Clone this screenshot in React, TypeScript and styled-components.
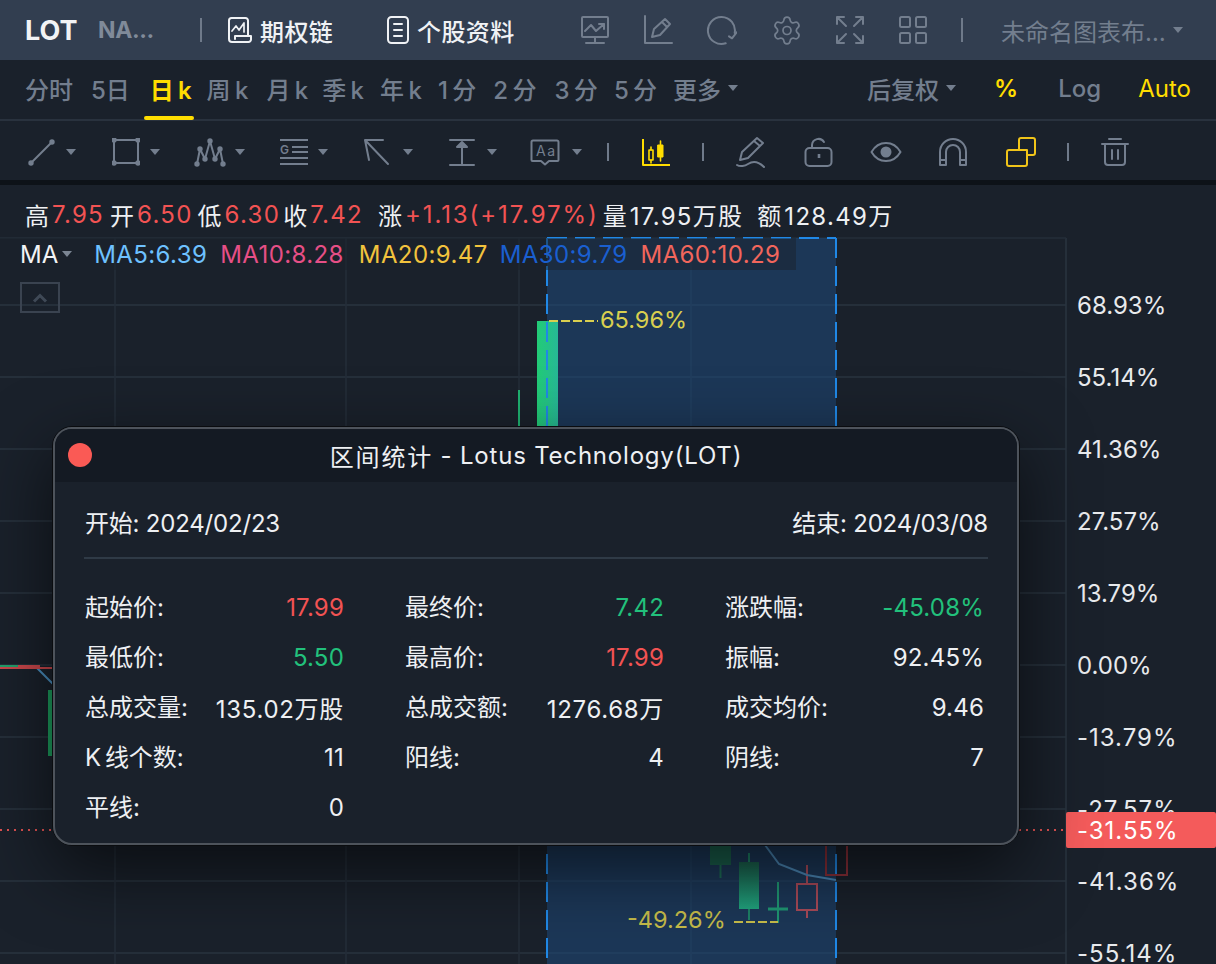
import React from "react";
import styled, { createGlobalStyle } from "styled-components";
import { Settings } from "lucide-react";

const FONT = `Inter, "Noto Sans CJK SC", sans-serif`;
const GRAY = "#737e8e";
const YELLOW = "#ffdd00";
const RED = "#f25353";
const GREEN = "#22c17c";

const Global = createGlobalStyle`
  html, body { margin: 0; padding: 0; background: #1a212b; }
  body { font-family: ${FONT}; overflow: hidden; }
  #root { width: 1216px; height: 964px; overflow: hidden; }
`;

const Page = styled.div`
  width: 1216px;
  height: 964px;
  display: flex;
  flex-direction: column;
  background: #1a212b;
  overflow: hidden;
`;

const TopBar = styled.header`
  height: 60px;
  flex: none;
  display: flex;
  align-items: center;
  padding-left: 25px;
  background: #323e50;
  color: #f0f2f5;
  font-size: 24px;
`;
const Ticker = styled.span`
  font-size: 27px;
  font-weight: 700;
  color: #f2f3f5;
  width: 73px;
`;
const TickerName = styled.span`
  font-size: 23px;
  font-weight: 700;
  letter-spacing: -0.4px;
  color: #808a99;
  width: 102px;
`;
const VBar = styled.i<{ $ml?: number; $mr?: number; $h?: number; $c?: string }>`
  display: block;
  flex: none;
  width: 2px;
  height: ${(p) => p.$h ?? 24}px;
  margin-left: ${(p) => p.$ml ?? 0}px;
  margin-right: ${(p) => p.$mr ?? 0}px;
  background: ${(p) => p.$c ?? "#6f7a8a"};
`;
const TopLink = styled.span<{ $w: number }>`
  display: flex;
  align-items: center;
  gap: 7px;
  width: ${(p) => p.$w}px;
  flex: none;
  white-space: nowrap;
  color: #f0f2f5;
  font-weight: 500;
  letter-spacing: 0.4px;
`;
const TopIcon = styled.span<{ $ml: number; $w: number }>`
  display: flex;
  justify-content: center;
  flex: none;
  width: ${(p) => p.$w}px;
  margin-left: ${(p) => p.$ml}px;
  color: ${GRAY};
`;
const Layout = styled.span`
  display: flex;
  align-items: center;
  color: ${GRAY};
  white-space: nowrap;
`;
const Caret = styled.i<{ $ml?: number; $c?: string }>`
  display: block;
  flex: none;
  width: 0;
  height: 0;
  margin-left: ${(p) => p.$ml ?? 7}px;
  border-left: 5px solid transparent;
  border-right: 5px solid transparent;
  border-top: 6px solid ${(p) => p.$c ?? GRAY};
`;

const PeriodBar = styled.nav`
  height: 61px;
  flex: none;
  box-sizing: border-box;
  display: flex;
  align-items: center;
  padding-left: 25px;
  padding-bottom: 3px;
  border-bottom: 2px solid #29323e;
  color: ${GRAY};
  font-size: 24px;
`;
const Period = styled.span<{ $on?: boolean; $accent?: boolean; $weight?: number; $ml: number }>`
  position: relative;
  display: flex;
  align-items: center;
  flex: none;
  white-space: pre;
  margin-left: ${(p) => p.$ml}px;
  word-spacing: -2px;
  color: ${(p) => (p.$on || p.$accent ? YELLOW : GRAY)};
  font-weight: ${(p) => p.$weight ?? (p.$on ? 600 : 500)};
  &::after {
    content: "";
    display: ${(p) => (p.$on ? "block" : "none")};
    position: absolute;
    left: -6px;
    right: -2px;
    bottom: -14px;
    height: 4px;
    border-radius: 2px;
    background: ${YELLOW};
  }
`;

const ToolBar = styled.div`
  height: 59px;
  flex: none;
  box-sizing: border-box;
  padding-top: 2px;
  display: flex;
  align-items: center;
  color: ${GRAY};
`;
const Tool = styled.span<{ $ml: number; $c?: string }>`
  display: flex;
  align-items: center;
  flex: none;
  margin-left: ${(p) => p.$ml}px;
  color: ${(p) => p.$c ?? GRAY};
`;

const Band = styled.div`
  height: 5px;
  flex: none;
  background: #0d1218;
`;
const Quote = styled.div`
  height: 52px;
  flex: none;
  box-sizing: border-box;
  display: flex;
  align-items: center;
  padding: 6px 0 0 25px;
  font-size: 24px;
  color: #eef0f3;
  white-space: nowrap;
`;
const QLabel = styled.span<{ $ml?: number }>`
  margin-left: ${(p) => p.$ml ?? 0}px;
  margin-right: 3px;
`;
const QValue = styled.span<{ $red?: boolean; $wide?: boolean }>`
  color: ${(p) => (p.$red ? RED : "#eef0f3")};
  font-size: 24px;
  letter-spacing: ${(p) => (p.$wide ? 1.9 : 1.3)}px;
`;

const Chart = styled.main`
  position: relative;
  flex: 1;
  overflow: hidden;
`;
const ChartSvg = styled.svg`
  display: block;
  width: 1216px;
  height: 727px;
  font-family: ${FONT};
`;
const Legend = styled.div`
  position: absolute;
  left: 0;
  top: 1px;
  width: 796px;
  height: 32px;
  display: flex;
  align-items: center;
  padding-left: 20px;
  box-sizing: border-box;
  font-size: 24px;
  white-space: nowrap;
  background: rgba(26, 33, 43, 0.5);
  color: #f2f3f5;
`;
const LegendItem = styled.span<{ $c: string; $ml: number }>`
  color: ${(p) => p.$c};
  margin-left: ${(p) => p.$ml}px;
  letter-spacing: 0.4px;
`;
const Collapse = styled.div`
  position: absolute;
  left: 20px;
  top: 45px;
  width: 40px;
  height: 31px;
  box-sizing: border-box;
  display: flex;
  align-items: center;
  justify-content: center;
  border: 2px solid #3a4350;
  color: #3f4956;
`;

const Modal = styled.section`
  position: absolute;
  left: 53px;
  top: 190px;
  width: 966px;
  height: 418px;
  box-sizing: border-box;
  border: 2px solid #4d535b;
  border-radius: 19px;
  overflow: hidden;
  display: flex;
  flex-direction: column;
  background: #1a212b;
  color: #eef0f3;
`;
const ModalShadow = styled.div`
  position: absolute;
  left: 52px;
  top: 189px;
  width: 968px;
  height: 420px;
  border-radius: 20px;
  border: 1px solid #0a0c0f;
  box-sizing: border-box;
  box-shadow: 0 24px 70px rgba(0, 0, 0, 0.6);
`;
const ModalHead = styled.header`
  position: relative;
  height: 53px;
  flex: none;
  box-sizing: border-box;
  padding-bottom: 1px;
  display: flex;
  align-items: center;
  justify-content: center;
  background: #141a23;
  font-size: 24px;
  letter-spacing: 0.8px;
  white-space: pre;
`;
const TitleCn = styled.span`
  letter-spacing: 1.8px;
`;
const Close = styled.i`
  position: absolute;
  left: 13px;
  top: 14px;
  width: 24px;
  height: 24px;
  border-radius: 50%;
  background: #fa5a55;
`;
const ModalBody = styled.div`
  flex: 1;
  padding: 0 29px 0 29px;
  display: flex;
  flex-direction: column;
`;
const Range = styled.div`
  height: 77px;
  flex: none;
  box-sizing: border-box;
  display: flex;
  align-items: center;
  justify-content: space-between;
  padding: 4px 0 0 1px;
  font-size: 24px;
  letter-spacing: -0.2px;
  border-bottom: 2px solid #2f3a46;
`;
const Stats = styled.div`
  display: grid;
  grid-template-columns: repeat(3, 259px);
  column-gap: 61px;
  grid-auto-rows: 50px;
  padding: 23px 0 0 1px;
  font-size: 24px;
`;
const Stat = styled.div`
  display: flex;
  align-items: center;
  justify-content: space-between;
  white-space: pre;
`;
const StatLabel = styled.span`
  padding-bottom: 3px;
  word-spacing: -3px;
`;
const StatValue = styled.span<{ $c?: string; $wide?: boolean }>`
  color: ${(p) => p.$c ?? "#eef0f3"};
  letter-spacing: ${(p) => (p.$wide ? 0.7 : 0.2)}px;
`;

type P = { children: React.ReactNode; w?: number; h?: number };
const Svg = ({ children, w = 28, h = 28 }: P) => (
  <svg width={w} height={h} viewBox={`0 0 ${w} ${h}`} fill="none" stroke="currentColor" strokeWidth={2} strokeLinecap="round" strokeLinejoin="round">
    {children}
  </svg>
);

const Dots = ({ pts }: { pts: number[][] }) => (
  <>
    {pts.map(([x, y], i) => (
      <circle key={i} cx={x} cy={y} r={2.7} fill="currentColor" stroke="none" />
    ))}
  </>
);

const I = {
  option: (
    <Svg w={26} h={28}>
      <path d="M21 20V4.500A2.500 2.500 0 0 0 18.500 2H4.500A2.500 2.500 0 0 0 2 4.500V23a3 3 0 0 0 3 3h16.500a2.500 2.500 0 0 0 2.500-2.500V20H8v3" />
      <path d="M5 15l4-5 3 4 5-7v9" strokeWidth={1.7} />
    </Svg>
  ),
  doc: (
    <Svg w={24} h={30}>
      <rect x="2" y="2" width="20" height="26" rx="3.500" />
      <path d="M8 9h8M8 15h8M8 21h8" />
    </Svg>
  ),
  monitor: (
    <Svg w={30} h={30}>
      <rect x="2" y="2" width="26" height="20" rx="1" />
      <path d="M15 22v6M6 28h18M5 16l6-6 5 6 8-7M19 9h5v5" />
    </Svg>
  ),
  editChart: (
    <Svg w={30} h={30}>
      <path d="M1 1v27h27" />
      <path d="M8 22l2-8L21 4l5 5-10 11z M18 7l5 5" />
    </Svg>
  ),
  refresh: (
    <Svg w={34} h={32}>
      <path d="M22.700 29.300A13.500 13.500 0 1 1 31.700 19" />
      <path d="M26 22.300l3 2 4.700-6" />
    </Svg>
  ),
  expand: (
    <Svg w={30} h={30}>
      <path d="M2 9V2h7M2 2l9 9M28 9V2h-7M28 2l-9 9M2 21v7h7M2 28l9-9M28 21v7h-7M28 28l-9-9" />
    </Svg>
  ),
  grid: (
    <Svg w={30} h={30}>
      <rect x="2" y="2" width="10" height="10" rx="1.500" />
      <rect x="18" y="2" width="10" height="10" rx="1.500" />
      <rect x="2" y="18" width="10" height="10" rx="1.500" />
      <rect x="18" y="18" width="10" height="10" rx="1.500" />
    </Svg>
  ),
  line: (
    <Svg>
      <path d="M3 25L24 4" />
      <Dots pts={[[3, 25], [24, 4]]} />
    </Svg>
  ),
  rect: (
    <Svg>
      <rect x="2" y="2" width="24" height="23" />
      <Dots pts={[[2, 2], [26, 2], [2, 25], [26, 25]]} />
    </Svg>
  ),
  wave: (
    <Svg w={32} h={30}>
      <path d="M3 27L6 12l5 10L16 4l5 18 5-10 3 15" />
      <Dots pts={[[3, 27], [6, 12], [11, 22], [16, 4], [21, 22], [26, 12], [29, 27]]} />
    </Svg>
  ),
  fib: (
    <Svg w={28} h={28}>
      <path d="M0 2h28M12 9h16M12 14h16M0 20h28M0 26h28" strokeLinecap="butt" />
      <text x="0" y="16" fontSize="12" fontWeight="600" stroke="none" fill="currentColor" fontFamily="Inter, sans-serif">G</text>
    </Svg>
  ),
  arrow: (
    <Svg>
      <path d="M26 26L3 2M3 2h18M3 2l4 20" />
    </Svg>
  ),
  price: (
    <Svg>
      <path d="M2 2h24M2 27h24M14 7v20" />
      <path d="M9 9l5-5 5 5z" fill="currentColor" />
    </Svg>
  ),
  text: (
    <Svg w={32} h={28}>
      <path d="M4 2.500h24a1.500 1.500 0 0 1 1.500 1.500v18a1 1 0 0 1-1 1H20l-4 3.500-4-3.500H3.500a1 1 0 0 1-1-1V4A1.500 1.500 0 0 1 4 2.500z" />
      <text x="7" y="18" fontSize="14" letterSpacing="1.500" stroke="none" fill="currentColor" fontFamily="Inter, sans-serif">Aa</text>
    </Svg>
  ),
  candle: (
    <Svg w={30} h={30}>
      <path d="M2 2v26h27" strokeLinecap="butt" />
      <rect x="8" y="13" width="4" height="10" strokeWidth={1.600} />
      <path d="M10 10v3M10 23v3" strokeWidth={1.600} />
      <rect x="17" y="8" width="5" height="12" fill="currentColor" strokeWidth={1} />
      <path d="M19.500 4v4M19.500 20v4" strokeWidth={1.600} />
    </Svg>
  ),
  pen: (
    <Svg w={30} h={32}>
      <path d="M4 24l2-8L21 2l6 5-15 15z M18 5l6 5" />
      <path d="M1 29c3 2 8 1 11-1s9-4 16 3" />
    </Svg>
  ),
  lock: (
    <Svg w={30} h={32}>
      <rect x="1.500" y="12" width="26" height="18" rx="4" />
      <path d="M8 12V9a6.500 6.500 0 0 1 12-3" />
      <path d="M15 18v4" strokeWidth={2.600} strokeLinecap="butt" />
    </Svg>
  ),
  eye: (
    <Svg w={32} h={24}>
      <path d="M1.500 12C5 6 10 3 16 3s11 3 14.500 9C27 18 22 21 16 21S5 18 1.500 12z" />
      <circle cx="16" cy="12" r="5.500" fill="currentColor" stroke="none" />
    </Svg>
  ),
  magnet: (
    <Svg w={30} h={30}>
      <path d="M2 28V15a13 13 0 0 1 26 0v13h-6V15a7 7 0 0 0-14 0v13zM2 23h6M22 23h6" />
    </Svg>
  ),
  link: (
    <Svg w={30} h={30}>
      <path d="M13 13V3a2 2 0 0 1 2-2h12a2 2 0 0 1 2 2v13a2 2 0 0 1-2 2H21" />
      <path d="M21 13v14a2 2 0 0 1-2 2H3a2 2 0 0 1-2-2V15a2 2 0 0 1 2-2h18" />
    </Svg>
  ),
  trash: (
    <Svg w={30} h={30}>
      <path d="M2 7h26M9 2h12M5 7v18a3 3 0 0 0 3 3h14a3 3 0 0 0 3-3V7M12 13v9M18 13v9" />
    </Svg>
  ),
};

const periods: [string, number][] = [["分时", 0], ["5日", 18], ["日 k", 20], ["周 k", 15], ["月 k", 18], ["季 k", 14], ["年 k", 16], ["1 分", 16], ["2 分", 17], ["3 分", 18], ["5 分", 16], ["更多", 16]];

const GRID_Y = [305, 377, 449, 521, 593, 665, 737, 809, 881, 953];
const GRID_X = [115, 346, 519, 691];
const AXIS = ["68.93%", "55.14%", "41.36%", "27.57%", "13.79%", "0.00%", "-13.79%", "-27.57%", "-41.36%", "-55.14%"];

const AxisText = ({ y, t, fill }: { y: number; t: string; fill: string }) => (
  <text x="1077" y={y} fontSize="24" fill={fill} letterSpacing={t.startsWith("-") ? 1 : 0}>{t}</text>
);

const stats: { l: string; v: string; c?: string }[] = [
  { l: "起始价:", v: "17.99", c: RED },
  { l: "最终价:", v: "7.42", c: GREEN },
  { l: "涨跌幅:", v: "-45.08%", c: GREEN },
  { l: "最低价:", v: "5.50", c: GREEN },
  { l: "最高价:", v: "17.99", c: RED },
  { l: "振幅:", v: "92.45%" },
  { l: "总成交量:", v: "135.02万股" },
  { l: "总成交额:", v: "1276.68万" },
  { l: "成交均价:", v: "9.46" },
  { l: "K 线个数:", v: "11" },
  { l: "阳线:", v: "4" },
  { l: "阴线:", v: "7" },
  { l: "平线:", v: "0" },
];

export default function App() {
  return (
    <Page>
      <Global />
      <TopBar>
        <Ticker>LOT</Ticker>
        <TickerName>NA...</TickerName>
        <VBar $mr={25} />
        <TopLink $w={159}>{I.option}期权链</TopLink>
        <TopLink $w={194}>{I.doc}个股资料</TopLink>
        <TopIcon $ml={0} $w={30}>{I.monitor}</TopIcon>
        <TopIcon $ml={34} $w={30}>{I.editChart}</TopIcon>
        <TopIcon $ml={29} $w={34}>{I.refresh}</TopIcon>
        <TopIcon $ml={34} $w={32}><Settings size={33} strokeWidth={1.3} /></TopIcon>
        <TopIcon $ml={32} $w={30}>{I.expand}</TopIcon>
        <TopIcon $ml={33} $w={30}>{I.grid}</TopIcon>
        <VBar $ml={33} $mr={38} />
        <Layout>未命名图表布…<Caret $ml={7} /></Layout>
      </TopBar>
      <PeriodBar>
        {periods.map(([t, ml], i) => (
          <Period key={t} $ml={ml} $on={i === 2}>
            {t}
            {t === "更多" && <Caret />}
          </Period>
        ))}
        <Period $ml={129}>后复权<Caret /></Period>
        <Period $ml={38} $accent $weight={600}>%</Period>
        <Period $ml={40}>Log</Period>
        <Period $ml={37} $accent $weight={400}>Auto</Period>
      </PeriodBar>
      <ToolBar>
        <Tool $ml={28}>{I.line}<Caret $ml={10} /></Tool>
        <Tool $ml={36}>{I.rect}<Caret $ml={10} /></Tool>
        <Tool $ml={34}>{I.wave}<Caret $ml={9} /></Tool>
        <Tool $ml={35}>{I.fib}<Caret $ml={10} /></Tool>
        <Tool $ml={34}>{I.arrow}<Caret $ml={13} /></Tool>
        <Tool $ml={35}>{I.price}<Caret $ml={11} /></Tool>
        <Tool $ml={32}>{I.text}<Caret $ml={11} /></Tool>
        <VBar $ml={25} $h={18} />
        <Tool $ml={32} $c={YELLOW}>{I.candle}</Tool>
        <VBar $ml={31} $h={18} />
        <Tool $ml={32}>{I.pen}</Tool>
        <Tool $ml={38}>{I.lock}</Tool>
        <Tool $ml={36}>{I.eye}</Tool>
        <Tool $ml={36}>{I.magnet}</Tool>
        <Tool $ml={38} $c="#f0c419">{I.link}</Tool>
        <VBar $ml={31} $h={18} />
        <Tool $ml={31}>{I.trash}</Tool>
      </ToolBar>
      <Band />
      <Quote>
        <QLabel>高</QLabel><QValue $red>7.95</QValue>
        <QLabel $ml={6}>开</QLabel><QValue $red>6.50</QValue>
        <QLabel $ml={5}>低</QLabel><QValue $red>6.30</QValue>
        <QLabel $ml={3}>收</QLabel><QValue $red>7.42</QValue>
        <QLabel $ml={15}>涨</QLabel><QValue $red $wide>+1.13(+17.97%)</QValue>
        <QLabel $ml={4}>量</QLabel><QValue>17.95万股</QValue>
        <QLabel $ml={14}>额</QLabel><QValue>128.49万</QValue>
      </Quote>
      <Chart>
        <ChartSvg viewBox="0 237 1216 727">
          <defs>
            <linearGradient id="up" x1="0" y1="0" x2="1" y2="0">
              <stop offset="0" stopColor="#22cc76" />
              <stop offset="1" stopColor="#27b896" />
            </linearGradient>
            <linearGradient id="c2" x1="0" y1="0" x2="0" y2="1">
              <stop offset="0" stopColor="#1a5f4c" />
              <stop offset="1" stopColor="#20a27d" />
            </linearGradient>
          </defs>
          {GRID_Y.map((y) => <line key={y} x1="0" x2="1066" y1={y} y2={y} stroke="#2a3440" strokeWidth="1.500" />)}
          {GRID_X.map((x) => <line key={x} x1={x} x2={x} y1="238" y2="964" stroke="#252e3a" strokeWidth="1.500" />)}
          <line x1="1066" x2="1066" y1="238" y2="964" stroke="#2a3440" strokeWidth="1.500" />
          <line x1="0" x2="1066" y1="238" y2="238" stroke="#252e3a" strokeWidth="1.500" />

          <line x1="519" x2="519" y1="390" y2="430" stroke="#1fb271" strokeWidth="2" />
          <rect x="48" y="690" width="4" height="66" fill="#1d9e5e" />
          <path d="M0 667H36l17 17" fill="none" stroke="#4a8fc0" strokeWidth="2" />
          <path d="M0 668H53" fill="none" stroke="#c9474b" strokeWidth="2" />
          <path d="M0 666H18" fill="none" stroke="#22a06c" strokeWidth="2" />
          <rect x="18" y="665" width="22" height="4" fill="#c9474b" />

          <rect x="547" y="238" width="289" height="726" fill="#1f4b7c" fillOpacity="0.55" />

          <rect x="537" y="321" width="21" height="110" fill="url(#up)" />
          <line x1="720.500" x2="720.500" y1="860" y2="878" stroke="#1c6b55" strokeWidth="2" />
          <rect x="710" y="845" width="21" height="20" fill="#1a5f4c" />
          <line x1="749" x2="749" y1="853" y2="920" stroke="#1d8166" strokeWidth="2" />
          <rect x="739" y="862" width="20" height="47" fill="url(#c2)" />
          <line x1="778" x2="778" y1="882" y2="923" stroke="#1f9672" strokeWidth="2" />
          <line x1="768" x2="788" y1="909" y2="909" stroke="#1f9672" strokeWidth="3" />
          <line x1="807" x2="807" y1="865" y2="884" stroke="#a84a58" strokeWidth="2" />
          <line x1="807" x2="807" y1="910" y2="918" stroke="#a84a58" strokeWidth="2" />
          <rect x="797" y="884" width="20" height="26" fill="none" stroke="#a84a58" strokeWidth="2" />
          <rect x="826" y="840" width="21" height="35" fill="none" stroke="#8a2f38" strokeWidth="2" />
          <path d="M765 845L779 864 807 875 836 880" fill="none" stroke="#4a86b4" strokeWidth="2" />

          <path d="M547 238H836" stroke="#2088e6" strokeWidth="2" strokeDasharray="20 8" />
          <path d="M547 238V964M836 238V964" stroke="#2088e6" strokeWidth="2" strokeDasharray="20 8" />

          <path d="M549 321H598" stroke="#d9cf4f" strokeWidth="2" strokeDasharray="9 3" />
          <text x="600" y="328" fontSize="23.500" fill="#d9cf4f">65.96%</text>

          <path d="M734 922H778" stroke="#c7bd4a" strokeWidth="2" strokeDasharray="9 3" />
          <text x="627" y="928" fontSize="23.500" fill="#c7bd4a">-49.26%</text>

          <path d="M0 830H53M1019 830H1066" stroke="#e05252" strokeWidth="2" strokeDasharray="2 5" />

          {GRID_Y.map((y, i) => (
            <AxisText key={y} y={y + 9} t={AXIS[i]} fill="#e8eaed" />
          ))}
          <rect x="1066" y="812" width="150" height="36" rx="2" fill="#f45b5b" />
          <AxisText y={839} t="-31.55%" fill="#fff" />
        </ChartSvg>

        <Legend>
          MA<Caret $ml={4} $c="#7b8593" />
          <LegendItem $c="#6ec1ff" $ml={22}>MA5:6.39</LegendItem>
          <LegendItem $c="#e64f86" $ml={13}>MA10:8.28</LegendItem>
          <LegendItem $c="#f2c33d" $ml={15}>MA20:9.47</LegendItem>
          <LegendItem $c="#1a5fd0" $ml={12}>MA30:9.79</LegendItem>
          <LegendItem $c="#f2665c" $ml={13}>MA60:10.29</LegendItem>
        </Legend>
        <Collapse>
          <svg width="16" height="10" viewBox="0 0 16 10" fill="none" stroke="currentColor" strokeWidth="3">
            <path d="M2 8.500L8 2.500l6 6" />
          </svg>
        </Collapse>

        <ModalShadow />
        <Modal>
          <ModalHead>
            <Close />
            <TitleCn>区间统计</TitleCn> - Lotus Technology(LOT)
          </ModalHead>
          <ModalBody>
            <Range>
              <span>开始: 2024/02/23</span>
              <span>结束: 2024/03/08</span>
            </Range>
            <Stats>
              {stats.map((s) => (
                <Stat key={s.l}>
                  <StatLabel>{s.l}</StatLabel>
                  <StatValue $c={s.c} $wide={s.v.includes("万")}>{s.v}</StatValue>
                </Stat>
              ))}
            </Stats>
          </ModalBody>
        </Modal>
      </Chart>
    </Page>
  );
}
